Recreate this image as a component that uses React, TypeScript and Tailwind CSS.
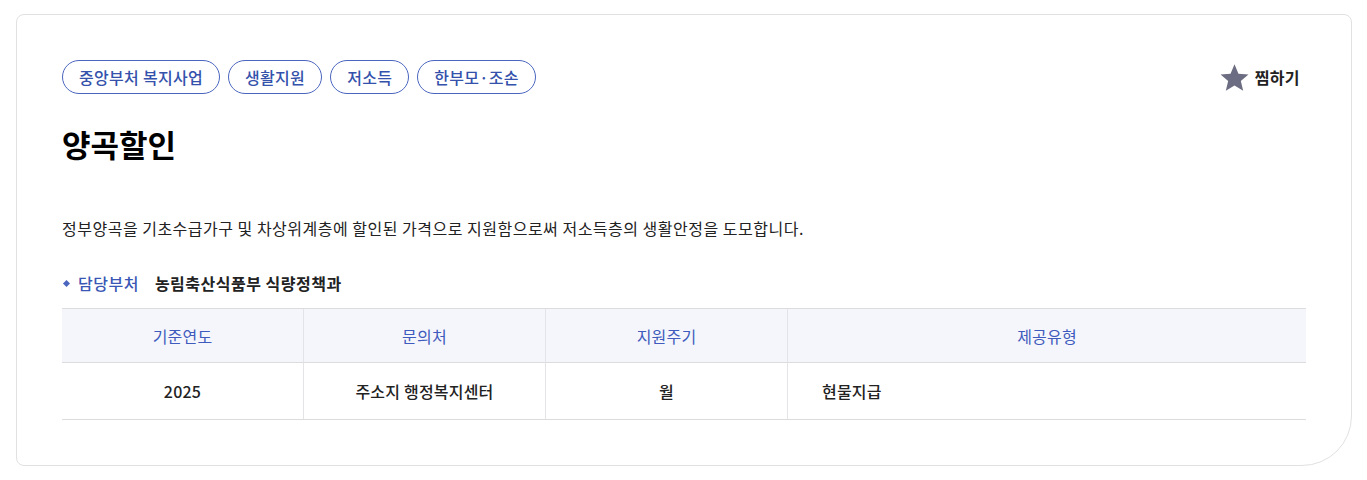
import { Fragment } from "react";

const tags = ["중앙부처 복지사업", "생활지원", "저소득", "한부모·조손"];

const cols = [
  { head: "기준연도", value: "2025", align: "center" },
  { head: "문의처", value: "주소지 행정복지센터", align: "center" },
  { head: "지원주기", value: "월", align: "center" },
  { head: "제공유형", value: "현물지급", align: "left" },
];

function Star() {
  return (
    <svg viewBox="0 0 24 24" className="h-[31px] w-[31px]" fill="#6c6c82">
      <path d="M12 1.8l3.05 7.2 7.75.62-5.9 5.08 1.82 7.6L12 18.2l-6.72 4.1 1.82-7.6-5.9-5.08 7.75-.62z" />
    </svg>
  );
}

export default function App() {
  return (
    <div
      className="min-h-[480px] bg-white pl-4 pr-[15px] pt-[14px]"
      style={{ fontFamily: '"Noto Sans CJK KR", "Noto Sans", sans-serif' }}
    >
      <div className="rounded-tl-lg rounded-tr-lg rounded-bl-lg rounded-br-[50px] border border-[#e1e1e1] bg-white px-[45px] pb-[45px] pt-[45px]">
        <div className="flex items-center justify-between">
          <div className="flex gap-2">
            {tags.map((t) => (
              <span
                key={t}
                className="flex h-[34px] items-center rounded-full border border-[#4a66bf] px-[16px] text-[16px] font-medium tracking-[0.3px] text-[#3451ab]"
              >
                {t}
              </span>
            ))}
          </div>
          <button className="mr-[6px] flex items-center gap-[5px] text-[16px] font-bold tracking-[0.4px] text-[#222]">
            <Star />
            찜하기
          </button>
        </div>

        <h1 className="mt-[28px] text-[31px] font-bold leading-[44px] text-black">
          양곡할인
        </h1>

        <p className="mt-[50px] text-[16px] leading-[24px] tracking-[0.5px] text-[#222]">
          정부양곡을 기초수급가구 및 차상위계층에 할인된 가격으로 지원함으로써 저소득층의 생활안정을 도모합니다.
        </p>

        <div className="mt-[31px] flex items-center text-[16px] font-bold leading-[24px] tracking-[0.5px]">
          <span className="ml-[2px] mr-[9px] h-[5px] w-[5px] rotate-45 bg-[#4a66bf]" />
          <span className="font-medium text-[#3a57b5]">담당부처</span>
          <span className="ml-[16px] text-[#222]">농림축산식품부 식량정책과</span>
        </div>

        <div className="mt-[13px] grid grid-cols-[241px_242px_242px_1fr] border-t border-b border-[#dcdcdc] text-[16px] tracking-[0.2px]">
          {cols.map((c, i) => (
            <div
              key={c.head}
              className={`flex h-[54px] items-center justify-center border-b border-[#dcdcdc] bg-[#f5f6fb] text-[#3e5bbd] ${
                i > 0 ? "border-l border-l-[#e3e3e8]" : ""
              }`}
            >
              {c.head}
            </div>
          ))}
          {cols.map((c, i) => (
            <Fragment key={c.value}>
              <div
                className={`flex h-[56px] items-center font-medium text-[#222] ${
                  c.align === "center" ? "justify-center" : "pl-[34px]"
                } ${i > 0 ? "border-l border-[#e3e3e8]" : ""}`}
              >
                {c.value}
              </div>
            </Fragment>
          ))}
        </div>
      </div>
    </div>
  );
}
